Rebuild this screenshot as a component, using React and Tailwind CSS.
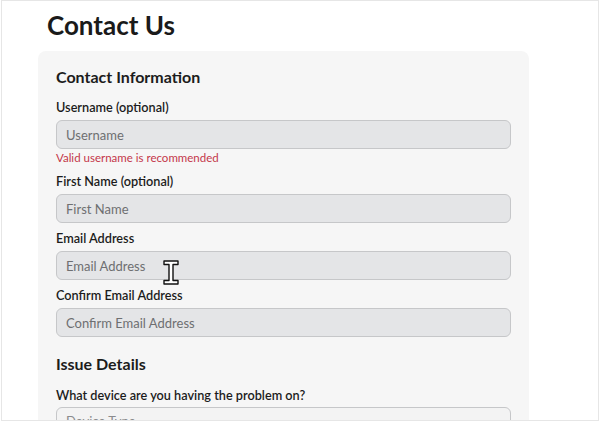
import { ChevronDown } from "lucide-react";

const font = { fontFamily: "Lato, 'Liberation Sans', sans-serif" };

function Field({ label, placeholder, error }) {
  return (
    <div className="flex flex-col">
      <label className="text-[12.7px] leading-[18px] font-semibold text-[#1c1c1c] mb-[4px]">{label}</label>
      <input
        placeholder={placeholder}
        className="h-[29px] w-full rounded-[6px] border border-[#c6c7c9] bg-[#e4e5e7] px-[9px] text-[13px] text-[#1c1c1c] placeholder:text-[#6e6f71] outline-none"
      />
      {error && <p className="text-[11.5px] leading-[16px] text-[#c4364a] mt-[1px]">{error}</p>}
    </div>
  );
}

function Cursor() {
  return (
    <svg className="absolute left-[161px] top-[259px]" width="16" height="25" viewBox="0 0 16 25">
      <path
        d="M1 1 H15 V4.5 H10 V20.5 H15 V24 H1 V20.5 H6 V4.5 H1 Z"
        fill="#fff"
        stroke="#111"
        strokeWidth="1.4"
        strokeLinejoin="round"
      />
    </svg>
  );
}

export default function App() {
  return (
    <div style={font} className="relative ml-px w-[598px] h-[421px] border border-[#e6e6e6] bg-white overflow-hidden">
      <div className="pl-[36px] pt-[8px]">
        <h1 className="ml-[9px] text-[26px] leading-[32px] font-bold text-[#1a1a1a]">Contact Us</h1>
        <div className="mt-[10px] w-[491px] rounded-[8px] bg-[#f6f6f6] px-[18px] pt-[14px] pb-[20px]">
          <h2 className="text-[16px] leading-[24px] font-bold text-[#1c1c1c]">Contact Information</h2>
          <div className="mt-[9px] flex flex-col gap-[6px]">
            <Field label="Username (optional)" placeholder="Username" error="Valid username is recommended" />
            <Field label="First Name (optional)" placeholder="First Name" />
            <Field label="Email Address" placeholder="Email Address" />
            <Field label="Confirm Email Address" placeholder="Confirm Email Address" />
          </div>
          <h2 className="mt-[15px] text-[16px] leading-[24px] font-bold text-[#1c1c1c]">Issue Details</h2>
          <div className="mt-[10px] flex flex-col">
            <label className="text-[12.7px] leading-[18px] font-semibold text-[#1c1c1c] mb-[3px]">
              What device are you having the problem on?
            </label>
            <div className="relative h-[29px] rounded-[6px] border border-[#c6c7c9] bg-[#f3f3f3] px-[9px] flex items-center">
              <span className="text-[13px] text-[#8a8b8d]">Device Type</span>
              <ChevronDown className="absolute right-[10px] top-[8px] text-[#8a8b8d]" size={13} strokeWidth={1.6} />
            </div>
          </div>
        </div>
      </div>
      <Cursor />
    </div>
  );
}
